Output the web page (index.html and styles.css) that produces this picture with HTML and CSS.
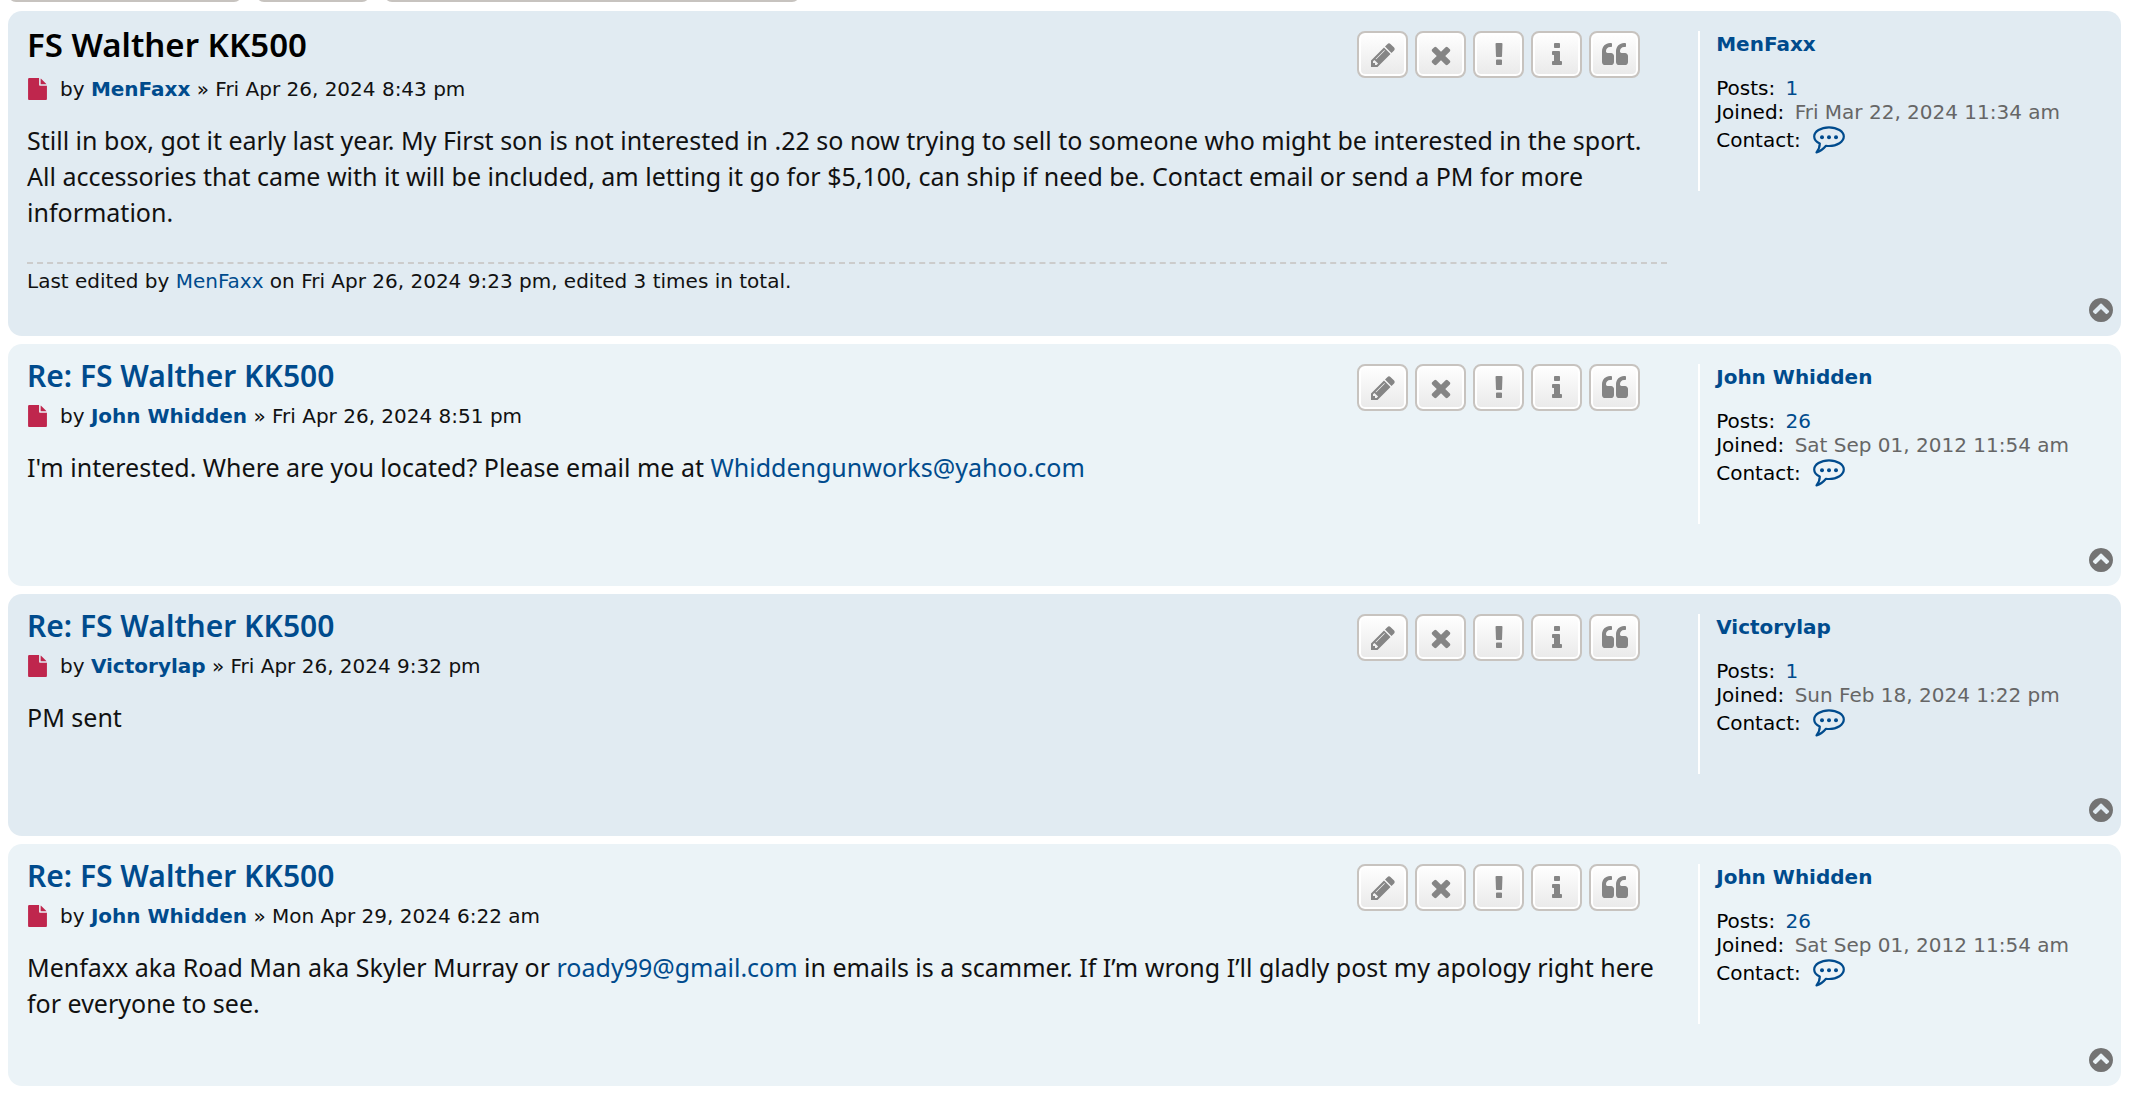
FILE: index.html
```html
<!DOCTYPE html>
<html lang="en">
<head>
    <meta charset="UTF-8">
    <meta name="viewport" content="width=device-width, initial-scale=1.0">
    <title>FS Walther KK500</title>
    <link rel="stylesheet" href="styles.css">
</head>
<body>
    <svg class="sprite" aria-hidden="true">
        <symbol id="file" viewBox="128 0 1536 1792"><path d="M1152 512V40q22 14 36 28l408 408q14 14 28 36h-472zm-128 32q0 40 28 68t68 28h544v1056q0 40-28 68t-68 28H224q-40 0-68-28t-28-68V96q0-40 28-68t68-28h800v544z"/></symbol>
        <symbol id="pencil" viewBox="0 0 1792 1792"><path d="M491 1536l91-91-235-235-91 91v107h128v128h107zm523-928q0-22-22-22-10 0-17 7l-542 542q-7 7-7 17 0 22 22 22 10 0 17-7l542-542q7-7 7-17zm-54-192l416 416-832 832H128v-416zm683 96q0 53-37 90l-166 166-416-416 166-165q36-38 90-38 53 0 91 38l235 234q37 39 37 91z"/></symbol>
        <symbol id="times" viewBox="0 0 1792 1792"><path d="M1490 1322q0 40-28 68l-136 136q-28 28-68 28t-68-28l-294-294-294 294q-28 28-68 28t-68-28l-136-136q-28-28-28-68t28-68l294-294-294-294q-28-28-28-68t28-68l136-136q28-28 68-28t68 28l294 294 294-294q28-28 68-28t68 28l136 136q28 28 28 68t-28 68l-294 294 294 294q28 28 28 68z"/></symbol>
        <symbol id="exclamation" viewBox="0 0 1792 1792"><path d="M1088 1248v224q0 26-19 45t-45 19H768q-26 0-45-19t-19-45v-224q0-26 19-45t45-19h256q26 0 45 19t19 45zm30-1056l-28 768q-1 26-20.5 45t-45.5 19H768q-26 0-45.500-19t-20.500-45l-28-768q-1-26 17.500-45t44.500-19h320q26 0 44.500 19t17.500 45z"/></symbol>
        <symbol id="info" viewBox="0 0 1792 1792"><path d="M1216 1344v128q0 26-19 45t-45 19H640q-26 0-45-19t-19-45v-128q0-26 19-45t45-19h64V896h-64q-26 0-45-19t-19-45V704q0-26 19-45t45-19h384q26 0 45 19t19 45v576h64q26 0 45 19t19 45zm-128-1152v192q0 26-19 45t-45 19H768q-26 0-45-19t-19-45V192q0-26 19-45t45-19h256q26 0 45 19t19 45z"/></symbol>
        <symbol id="quote" viewBox="0 0 1792 1792"><path d="M832 960v384q0 80-56 136t-136 56H256q-80 0-136-56t-56-136V640q0-104 40.500-198.500T214 278t163.500-109.500T576 128h64q26 0 45 19t19 45v128q0 26-19 45t-45 19h-64q-106 0-181 75t-75 181v32q0 40 28 68t68 28h224q80 0 136 56t56 136zm896 0v384q0 80-56 136t-136 56h-384q-80 0-136-56t-56-136V640q0-104 40.500-198.500T1110 278t163.500-109.500T1472 128h64q26 0 45 19t19 45v128q0 26-19 45t-45 19h-64q-106 0-181 75t-75 181v32q0 40 28 68t68 28h224q80 0 136 56t56 136z"/></symbol>
        <symbol id="top" viewBox="0 0 1792 1792"><path d="M1293 1139l102-102q19-19 19-45t-19-45L941 493q-19-19-45-19t-45 19L397 947q-19 19-19 45t19 45l102 102q19 19 45 19t45-19l307-307 307 307q19 19 45 19t45-19zm371-243q0 209-103 385.500T1281.500 1561 896 1664t-385.500-103T231 1281.500 128 896t103-385.500T510.500 231 896 128t385.500 103T1561 510.500 1664 896z"/></symbol>
        <symbol id="bubble" viewBox="0 0 32 28"><path d="M6.800 17.600C3.200 16 1.200 13.500 1.200 10.600 1.200 5.500 7.800 1.300 16 1.300s14.800 4.200 14.800 9.300S24.200 20 16 20c-1 0-2-.1-3-.2-2.500 3-5.500 5.500-9.500 6.600C5.600 23.800 6.800 21 6.800 17.600z" fill="none" stroke="currentColor" stroke-width="2.200" stroke-linejoin="round"/><circle cx="9" cy="11.300" r="2"/><circle cx="16" cy="11.300" r="2"/><circle cx="23" cy="11.300" r="2"/></symbol>
    </svg>

    <div class="action-bar">
        <button class="bar-button reply" type="button" aria-label="Post reply"></button>
        <button class="bar-button tools" type="button" aria-label="Topic tools"></button>
        <div class="search-box">
            <input type="search" aria-label="Search this topic">
            <button type="button" aria-label="Search"></button>
            <button type="button" aria-label="Advanced search"></button>
        </div>
    </div>

    <div class="post bg2" id="p1">
        <div class="postbody">
            <div class="post-header">
                <div class="post-heading">
                    <h3 class="first"><a href="#p1">FS Walther KK500</a></h3>
                    <p class="author"><a href="#p1" aria-label="Post"><svg class="icon-file"><use href="#file"/></svg></a>by <a class="username" href="#">MenFaxx</a> » Fri Apr 26, 2024 8:43 pm</p>
                </div>
                <div class="post-buttons">
                    <button type="button" aria-label="Edit post"><svg><use href="#pencil"/></svg></button>
                    <button type="button" aria-label="Delete post"><svg><use href="#times"/></svg></button>
                    <button type="button" aria-label="Report this post"><svg><use href="#exclamation"/></svg></button>
                    <button type="button" aria-label="Information"><svg><use href="#info"/></svg></button>
                    <button type="button" aria-label="Reply with quote"><svg><use href="#quote"/></svg></button>
                </div>
            </div>
            <div class="content">Still in box, got it early last year. My First son is not interested in .22 so now trying to sell to someone who might be interested in the sport. All accessories that came with it will be included, am letting it go for $5,100, can ship if need be. Contact email or send a PM for more information.</div>
            <div class="notice">Last edited by <a href="#">MenFaxx</a> on Fri Apr 26, 2024 9:23 pm, edited 3 times in total.</div>
        </div>
        <div class="side">
            <div class="postprofile">
                <a class="username" href="#">MenFaxx</a>
                <p><span class="label">Posts:</span> <a href="#">1</a></p>
                <p><span class="label">Joined:</span> Fri Mar 22, 2024 11:34 am</p>
                <p class="contact"><span class="label">Contact:</span> <a href="#" aria-label="Contact MenFaxx"><svg class="icon-bubble"><use href="#bubble"/></svg></a></p>
            </div>
            <a class="back-to-top" href="#" aria-label="Top"><svg><use href="#top"/></svg></a>
        </div>
    </div>

    <div class="post bg1" id="p2">
        <div class="postbody">
            <div class="post-header">
                <div class="post-heading">
                    <h3><a href="#p2">Re: FS Walther KK500</a></h3>
                    <p class="author"><a href="#p2" aria-label="Post"><svg class="icon-file"><use href="#file"/></svg></a>by <a class="username" href="#">John Whidden</a> » Fri Apr 26, 2024 8:51 pm</p>
                </div>
                <div class="post-buttons">
                    <button type="button" aria-label="Edit post"><svg><use href="#pencil"/></svg></button>
                    <button type="button" aria-label="Delete post"><svg><use href="#times"/></svg></button>
                    <button type="button" aria-label="Report this post"><svg><use href="#exclamation"/></svg></button>
                    <button type="button" aria-label="Information"><svg><use href="#info"/></svg></button>
                    <button type="button" aria-label="Reply with quote"><svg><use href="#quote"/></svg></button>
                </div>
            </div>
            <div class="content">I'm interested. Where are you located? Please email me at <a href="mailto:Whiddengunworks@yahoo.com">Whiddengunworks@yahoo.com</a></div>
        </div>
        <div class="side">
            <div class="postprofile">
                <a class="username" href="#">John Whidden</a>
                <p><span class="label">Posts:</span> <a href="#">26</a></p>
                <p><span class="label">Joined:</span> Sat Sep 01, 2012 11:54 am</p>
                <p class="contact"><span class="label">Contact:</span> <a href="#" aria-label="Contact John Whidden"><svg class="icon-bubble"><use href="#bubble"/></svg></a></p>
            </div>
            <a class="back-to-top" href="#" aria-label="Top"><svg><use href="#top"/></svg></a>
        </div>
    </div>

    <div class="post bg2" id="p3">
        <div class="postbody">
            <div class="post-header">
                <div class="post-heading">
                    <h3><a href="#p3">Re: FS Walther KK500</a></h3>
                    <p class="author"><a href="#p3" aria-label="Post"><svg class="icon-file"><use href="#file"/></svg></a>by <a class="username" href="#">Victorylap</a> » Fri Apr 26, 2024 9:32 pm</p>
                </div>
                <div class="post-buttons">
                    <button type="button" aria-label="Edit post"><svg><use href="#pencil"/></svg></button>
                    <button type="button" aria-label="Delete post"><svg><use href="#times"/></svg></button>
                    <button type="button" aria-label="Report this post"><svg><use href="#exclamation"/></svg></button>
                    <button type="button" aria-label="Information"><svg><use href="#info"/></svg></button>
                    <button type="button" aria-label="Reply with quote"><svg><use href="#quote"/></svg></button>
                </div>
            </div>
            <div class="content">PM sent</div>
        </div>
        <div class="side">
            <div class="postprofile">
                <a class="username" href="#">Victorylap</a>
                <p><span class="label">Posts:</span> <a href="#">1</a></p>
                <p><span class="label">Joined:</span> Sun Feb 18, 2024 1:22 pm</p>
                <p class="contact"><span class="label">Contact:</span> <a href="#" aria-label="Contact Victorylap"><svg class="icon-bubble"><use href="#bubble"/></svg></a></p>
            </div>
            <a class="back-to-top" href="#" aria-label="Top"><svg><use href="#top"/></svg></a>
        </div>
    </div>

    <div class="post bg1" id="p4">
        <div class="postbody">
            <div class="post-header">
                <div class="post-heading">
                    <h3><a href="#p4">Re: FS Walther KK500</a></h3>
                    <p class="author"><a href="#p4" aria-label="Post"><svg class="icon-file"><use href="#file"/></svg></a>by <a class="username" href="#">John Whidden</a> » Mon Apr 29, 2024 6:22 am</p>
                </div>
                <div class="post-buttons">
                    <button type="button" aria-label="Edit post"><svg><use href="#pencil"/></svg></button>
                    <button type="button" aria-label="Delete post"><svg><use href="#times"/></svg></button>
                    <button type="button" aria-label="Report this post"><svg><use href="#exclamation"/></svg></button>
                    <button type="button" aria-label="Information"><svg><use href="#info"/></svg></button>
                    <button type="button" aria-label="Reply with quote"><svg><use href="#quote"/></svg></button>
                </div>
            </div>
            <div class="content">Menfaxx aka Road Man aka Skyler Murray or <a href="mailto:roady99@gmail.com">roady99@gmail.com</a> in emails is a scammer. If I’m wrong I’ll gladly post my apology right here for everyone to see.</div>
        </div>
        <div class="side">
            <div class="postprofile">
                <a class="username" href="#">John Whidden</a>
                <p><span class="label">Posts:</span> <a href="#">26</a></p>
                <p><span class="label">Joined:</span> Sat Sep 01, 2012 11:54 am</p>
                <p class="contact"><span class="label">Contact:</span> <a href="#" aria-label="Contact John Whidden"><svg class="icon-bubble"><use href="#bubble"/></svg></a></p>
            </div>
            <a class="back-to-top" href="#" aria-label="Top"><svg><use href="#top"/></svg></a>
        </div>
    </div>
</body>
</html>
```
FILE: styles.css
```css
* {
    box-sizing: border-box;
}
body {
    margin: 0;
    padding: 0 8px 8px;
    background-color: #fff;
    color: #111;
    font-family: Verdana, "DejaVu Sans", sans-serif;
    font-size: 20px;
    line-height: 24px;
}
h3,
p {
    margin: 0;
}
a {
    color: #004b8d;
    text-decoration: none;
}
a:hover {
    text-decoration: underline;
}
svg {
    display: block;
    fill: currentColor;
}
.sprite {
    display: none;
}

/* action bar, scrolled nearly out of view */
.action-bar {
    display: flex;
    align-items: flex-end;
    gap: 14px;
    height: 2px;
    margin-bottom: 9px;
    overflow: hidden;
}
.bar-button,
.search-box {
    flex: none;
    height: 48px;
    border: 2px solid #c7c3bf;
    border-radius: 8px;
    background: #e9e9e9;
}
.reply {
    width: 234px;
}
.tools {
    width: 114px;
}
.search-box {
    display: flex;
    width: 416px;
    overflow: hidden;
}
.search-box input {
    flex: 1;
    min-width: 0;
    border: 0;
    background: #f1f1f1;
}
.search-box button {
    width: 57px;
    border: 0;
    border-left: 2px solid #c7c3bf;
    background: #e9e9e9;
}

/* posts */
.post {
    display: flex;
    margin-bottom: 8px;
    padding-left: 19px;
    border-radius: 14px;
}
.bg1 {
    background-color: #ebf3f7;
}
.bg2 {
    background-color: #e1ebf2;
}
.postbody {
    flex: 1;
    min-width: 0;
    padding-top: 13px;
    margin-right: 31px;
}
.post-header {
    display: flex;
    justify-content: space-between;
    align-items: flex-start;
    margin-bottom: 21px;
}
h3 {
    margin-bottom: 10px;
    font-family: "Trebuchet MS", "Noto Sans", sans-serif;
    font-size: 30px;
    font-weight: 600;
    line-height: 37px;
}
h3.first {
    margin-bottom: 12px;
    font-size: 33px;
    line-height: 41px;
}
h3.first a {
    color: #000;
}
.author {
    display: flex;
    align-items: center;
    white-space: pre;
}
.username {
    font-weight: bold;
}
.icon-file {
    width: 19px;
    height: 22px;
    margin: 0 13px 0 1px;
    color: #bf264d;
}
.post-buttons {
    display: flex;
    gap: 7px;
    margin: 7px 27px 0 0;
}
.post-buttons button {
    width: 51px;
    height: 47px;
    padding: 8px 10px;
    border: 2px solid #c7c3bf;
    border-radius: 8px;
    background: linear-gradient(#fff, #e9e9e9);
    box-shadow: inset 0 0 0 2px #fff;
    color: #858585;
    cursor: pointer;
}
.post-buttons svg {
    width: 28px;
    height: 28px;
}
.content {
    font-family: "Trebuchet MS", "Noto Sans", sans-serif;
    font-size: 25px;
    line-height: 36px;
}
.notice {
    margin: 32px 0 43px;
    padding-top: 5px;
    border-top: 2px dashed #ccc;
}

/* profile column */
.side {
    display: flex;
    flex: 0 0 calc(20% + 4px);
    flex-direction: column;
    justify-content: space-between;
    gap: 22px;
    padding: 20px 0 12px;
}
.postprofile {
    min-height: 160px;
    padding: 1px 0 0 16px;
    border-left: 2px solid #fff;
    color: #666;
}
.postprofile .username {
    display: block;
    margin-bottom: 20px;
}
.label {
    margin-right: 4px;
    color: #000;
}
.contact {
    display: flex;
    align-items: center;
    margin-top: 2px;
}
.icon-bubble {
    width: 32px;
    height: 28px;
    margin-left: 8px;
}
.back-to-top {
    align-self: flex-end;
    margin-right: 6px;
    color: #737373;
}
.back-to-top svg {
    width: 28px;
    height: 28px;
}
```
